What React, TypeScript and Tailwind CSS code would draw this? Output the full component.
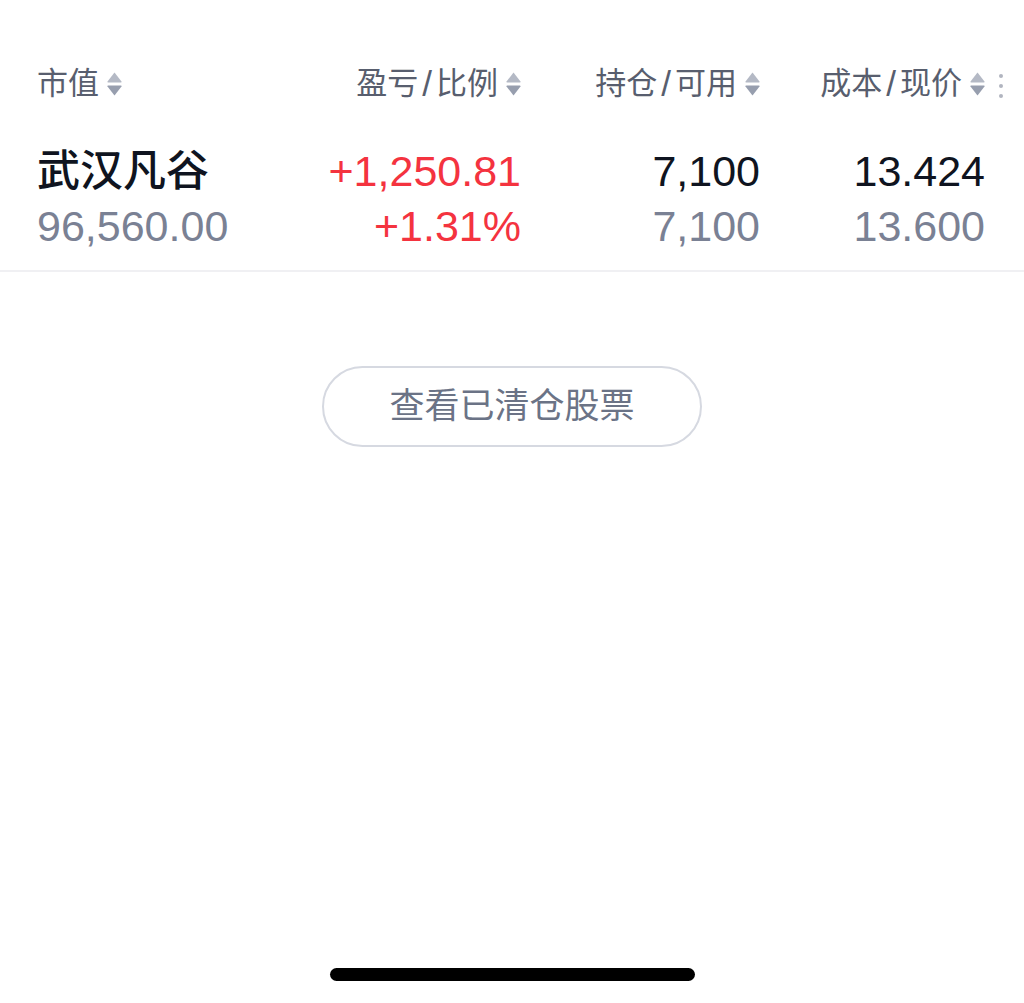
import React from "react";

const FONT = "font-['Liberation_Sans','Noto_Sans_CJK_SC',sans-serif]";

function SortIcon() {
  return (
    <svg width="15" height="24" viewBox="0 0 15 24" className="ml-[8px] shrink-0">
      <path d="M7.5 0.5 L14.5 9.6 Q15 10.6 13.8 10.6 L1.2 10.6 Q0 10.6 0.5 9.6 Z" fill="#b4b9c5" />
      <path d="M7.5 23.5 L14.5 14.4 Q15 13.4 13.8 13.4 L1.2 13.4 Q0 13.4 0.5 14.4 Z" fill="#979eae" />
    </svg>
  );
}

function HeaderCell({ label, align }: { label: string; align: "left" | "right" }) {
  const parts = label.split("/");
  return (
    <div className={`flex h-[40px] items-center ${align === "right" ? "justify-end" : "justify-start"}`}>
      <span className="flex items-center whitespace-nowrap text-[31px] leading-[40px] text-[#585e6e]">
        {parts[0]}
        {parts[1] && (
          <>
            <span className="mx-[4px] text-[35px] leading-[40px]">/</span>
            {parts[1]}
          </>
        )}
      </span>
      <SortIcon />
    </div>
  );
}

function ValueCell({
  top,
  bottom,
  topClass,
  bottomClass,
}: {
  top: string;
  bottom: string;
  topClass: string;
  bottomClass: string;
}) {
  return (
    <div className="flex flex-col items-end">
      <span className={`text-[43px] leading-[54px] ${topClass}`}>{top}</span>
      <span className={`text-[43px] leading-[56px] ${bottomClass}`}>{bottom}</span>
    </div>
  );
}

export default function App() {
  return (
    <div className={`relative h-[1003px] w-[1024px] overflow-hidden bg-white ${FONT}`}>
      <div className="relative mt-[64px] grid grid-cols-[245px_239px_239px_225px] pl-[37px] pr-[39px]">
        <HeaderCell label="市值" align="left" />
        <HeaderCell label="盈亏/比例" align="right" />
        <HeaderCell label="持仓/可用" align="right" />
        <HeaderCell label="成本/现价" align="right" />
        <div className="absolute right-[21px] top-[10px] flex flex-col gap-[6px]">
          <span className="h-[4px] w-[4px] rounded-full bg-[#b1b5c0]" />
          <span className="h-[4px] w-[4px] rounded-full bg-[#b1b5c0]" />
          <span className="h-[4px] w-[4px] rounded-full bg-[#b1b5c0]" />
        </div>
      </div>

      <div className="mt-[40px] grid grid-cols-[245px_239px_239px_225px] pl-[37px] pr-[39px]">
        <div className="flex flex-col items-start">
          <span className="whitespace-nowrap text-[43px] font-medium leading-[54px] text-[#0f1420]">武汉凡谷</span>
          <span className="text-[43px] leading-[56px] text-[#7a8194]">96,560.00</span>
        </div>
        <ValueCell top="+1,250.81" bottom="+1.31%" topClass="text-[#f4333f]" bottomClass="text-[#f4333f]" />
        <ValueCell top="7,100" bottom="7,100" topClass="text-[#0f1420]" bottomClass="text-[#7a8194]" />
        <ValueCell top="13.424" bottom="13.600" topClass="text-[#0f1420]" bottomClass="text-[#7a8194]" />
      </div>

      <div className="mt-[16px] h-[2px] w-full bg-[#f0f0f3]" />

      <div className="mt-[94px] flex justify-center">
        <button className="flex h-[81px] w-[380px] items-center justify-center rounded-full border-2 border-[#d6d9e1] bg-white text-[35px] text-[#6b7386]">
          查看已清仓股票
        </button>
      </div>

      <div className="absolute bottom-[22px] left-[330px] h-[13px] w-[365px] rounded-full bg-black" />
    </div>
  );
}
